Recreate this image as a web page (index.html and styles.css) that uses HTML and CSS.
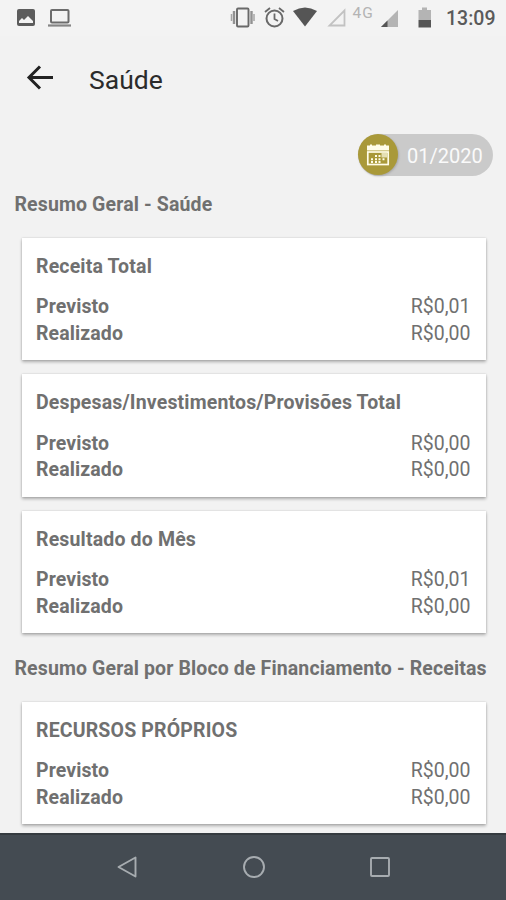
FILE: index.html
```html
<!DOCTYPE html>
<html lang="pt-BR">
<head>
<meta charset="utf-8">
<title>Saúde</title>
<link rel="stylesheet" href="styles.css">
</head>
<body>
<div class="screen">
  <header class="status">
    <svg class="status-icons" width="80" height="36" viewBox="0 0 80 36">
      <rect x="17" y="9" width="18" height="17" rx="2" fill="#5c5c5c"/>
      <path d="M19 23v-2l3-3 2 2 4-4 5 5v2z" fill="#f3f3f3"/>
      <rect x="51" y="10" width="17.500" height="12.500" rx="1" fill="none" stroke="#6c6c6c" stroke-width="2"/>
      <path d="M48 25.500h23" stroke="#858585" stroke-width="2.200"/>
    </svg>
    <svg class="status-icons" width="216" height="36" viewBox="220 0 216 36">
      <g fill="none" stroke="#696969">
        <rect x="237" y="8.500" width="11.500" height="18" rx="1" stroke-width="1.900"/>
        <path d="M234 11v13M251.500 11v13" stroke="#929292" stroke-width="2.400"/>
        <path d="M231.500 14v7M254 14v7" stroke="#a5a5a5" stroke-width="1.500"/>
        <circle cx="274.500" cy="18.500" r="8" stroke-width="2"/>
        <path d="M274.500 13.500v5.500l3.500 2M265 12l5-4M279 8l5 4" stroke-width="1.800"/>
      </g>
      <path d="M293 11q12-7 24 0l-12 15.500z" fill="#555"/>
      <path d="M329.500 25.500h15v-15z" fill="none" stroke="#c2c2c2" stroke-width="1.800"/>
      <text class="network" x="352.500" y="18">4G</text>
      <path d="M381 27h17V10z" fill="#b4b4b4"/>
      <path d="M381 27h6.500v-6.500z" fill="#555"/>
      <path d="M418.500 20V10h3.500V7.500h5V10h4v10z" fill="#b4b4b4"/>
      <path d="M418.500 20H431v7.500h-12.500z" fill="#555"/>
    </svg>
    <span class="clock">13:09</span>
  </header>
  <div class="appbar">
    <svg width="28" height="26" viewBox="0 0 28 26" fill="none" stroke="#222" stroke-width="3"><path d="M27 12.500H3M14 1.500L3 12.500L14 23.500"/></svg>
    <h1>Saúde</h1>
  </div>
  <main class="content">
    <div class="filter">
      <div class="pill">
        <span class="pill-icon">
          <svg width="24" height="24" viewBox="0 0 24 24">
            <path d="M2 5V3h2V1.500h2V3h4V1.500h4V3h4V1.500h2V3h2v2z" fill="#fffde8"/>
            <rect x="1" y="2.500" width="22" height="5" fill="#fffde8"/>
            <rect x="1.800" y="9" width="20.400" height="12.500" fill="none" stroke="#fffde8" stroke-width="1.700"/>
            <path d="M9 13h2M12.500 13h2M5 16.200h2M9 16.200h2M12.500 16.200h2M16.500 16.200h2M5 19h2M9 19h2M12.500 19h2" stroke="#fffde8" stroke-width="1.900"/>
            <rect x="15.500" y="10" width="5.500" height="4.500" fill="#fffde8" opacity=".7"/>
          </svg>
        </span>
        <span class="pill-text">01/2020</span>
      </div>
    </div>
    <h2>Resumo Geral - Saúde</h2>
    <section class="cards">
      <article class="card">
        <h3>Receita Total</h3>
        <div class="row"><b>Previsto</b><span>R$0,01</span></div>
        <div class="row"><b>Realizado</b><span>R$0,00</span></div>
      </article>
      <article class="card">
        <h3>Despesas/Investimentos/Provisões Total</h3>
        <div class="row"><b>Previsto</b><span>R$0,00</span></div>
        <div class="row"><b>Realizado</b><span>R$0,00</span></div>
      </article>
      <article class="card">
        <h3>Resultado do Mês</h3>
        <div class="row"><b>Previsto</b><span>R$0,01</span></div>
        <div class="row"><b>Realizado</b><span>R$0,00</span></div>
      </article>
    </section>
    <h2 class="second">Resumo Geral por Bloco de Financiamento - Receitas</h2>
    <section class="cards">
      <article class="card">
        <h3>RECURSOS PRÓPRIOS</h3>
        <div class="row"><b>Previsto</b><span>R$0,00</span></div>
        <div class="row"><b>Realizado</b><span>R$0,00</span></div>
      </article>
    </section>
  </main>
  <nav class="navbar">
    <svg width="24" height="24" viewBox="0 0 24 24"><path d="M20.500 2.500v19L3.500 12z"/></svg>
    <svg width="24" height="24" viewBox="0 0 24 24"><circle cx="12" cy="12" r="10"/></svg>
    <svg width="24" height="24" viewBox="0 0 24 24"><rect x="3" y="3" width="18" height="18" rx="1"/></svg>
  </nav>
</div>
</body>
</html>
```
FILE: styles.css
```css
* { box-sizing: border-box; }
body { margin: 0; background: #f2f2f2; font-family: Roboto, "Liberation Sans", sans-serif; color: #707070; }
h1, h2, h3 { margin: 0; }
.screen { width: 506px; height: 900px; display: flex; flex-direction: column; overflow: hidden; }
.status { height: 36px; flex: none; display: flex; justify-content: space-between; background: #f3f3f3; }
.status-icons { display: block; flex: none; }
.status-icons + .status-icons { margin-left: 140px; }
.network { font-size: 15.500px; font-weight: 400; fill: #b4b4b4; letter-spacing: 1px; }
.clock { flex: 1; padding-left: 10px; font-size: 19.500px; line-height: 37px; color: #5a5a5a; font-weight: 500; white-space: nowrap; }
.appbar { height: 86px; flex: none; display: flex; align-items: center; padding: 0 0 3px 26px; }
.appbar h1 { margin-left: 35px; font-size: 26.500px; font-weight: 400; line-height: 36px; color: #2b2b2b; padding-top: 4px; }
.content { flex: 1; min-height: 0; overflow: hidden; }
.filter { display: flex; justify-content: flex-end; padding: 12px 13px 0 0; }
.pill { width: 135px; height: 42px; border-radius: 21px; background: #cacaca; display: flex; align-items: flex-start; }
.pill-icon { width: 40px; height: 41px; border-radius: 50%; background: #a99939; display: flex; align-items: center; justify-content: center; box-shadow: 1px 1px 2px #aaa; }
.pill-text { margin-left: 9px; font-size: 20px; color: #fafafa; line-height: 42px; padding-top: 1px; }
h2 { padding-left: 14.500px; margin-top: 14.500px; font-size: 19.500px; line-height: 27px; font-weight: 700; letter-spacing: .13px; white-space: nowrap; }
h2.second { margin-top: 21.500px; }
.cards { padding: 20px 20px 0 22px; display: flex; flex-direction: column; gap: 14px; }
.card { height: 122.500px; padding: 15px 15.500px 0 14px; background: #fff; box-shadow: 0 2px 3px rgba(0,0,0,.28), 0 0 2px rgba(0,0,0,.15); }
h3 { font-size: 19.500px; line-height: 27px; font-weight: 700; letter-spacing: .16px; margin-bottom: 14.500px; white-space: nowrap; }
.row { display: flex; justify-content: space-between; font-size: 19.500px; line-height: 26.700px; }
.row b { font-weight: 700; letter-spacing: .1px; }
.navbar { height: 67px; flex: none; display: flex; justify-content: space-between; align-items: center; padding: 0 114px 2px 115px; background: #444b52; border-top: 2px solid #353b40; }
.navbar svg { fill: none; stroke: #a7acb0; stroke-width: 1.900; stroke-linejoin: round; }
```
